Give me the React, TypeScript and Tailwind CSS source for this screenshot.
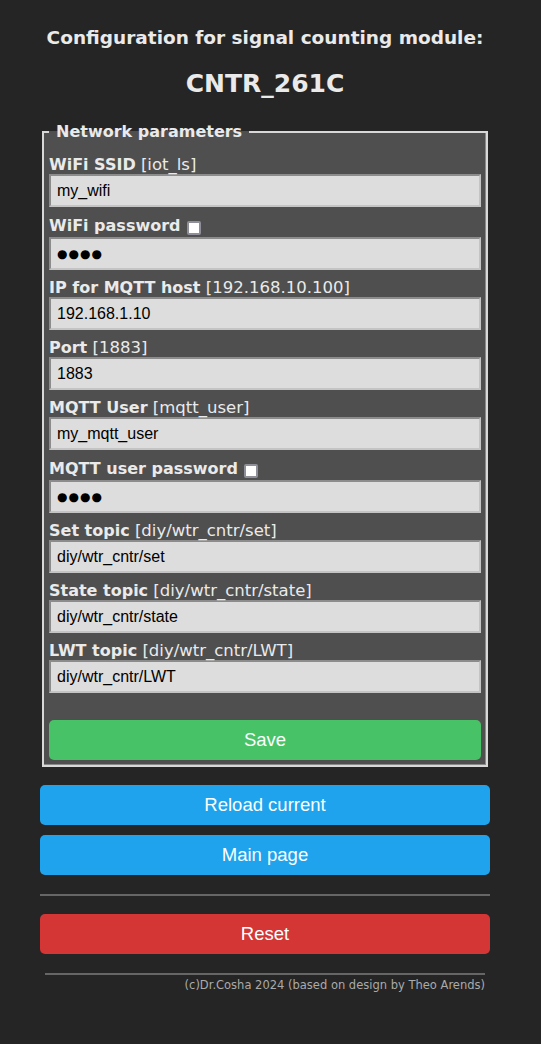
import React from 'react';

const fields = [
  { label: 'WiFi SSID', hint: '[iot_ls]', value: 'my_wifi' },
  { label: 'WiFi password', check: true, value: '●●●●', secret: true },
  { label: 'IP for MQTT host', hint: '[192.168.10.100]', value: '192.168.1.10' },
  { label: 'Port', hint: '[1883]', value: '1883' },
  { label: 'MQTT User', hint: '[mqtt_user]', value: 'my_mqtt_user' },
  { label: 'MQTT user password', check: true, value: '●●●●', secret: true },
  { label: 'Set topic', hint: '[diy/wtr_cntr/set]', value: 'diy/wtr_cntr/set' },
  { label: 'State topic', hint: '[diy/wtr_cntr/state]', value: 'diy/wtr_cntr/state' },
  { label: 'LWT topic', hint: '[diy/wtr_cntr/LWT]', value: 'diy/wtr_cntr/LWT' },
];

export default function App() {
  return (
    <div className="min-h-[1044px] bg-[#252525] font-['DejaVu_Sans',Verdana,sans-serif] text-[#eaeaea]">
      <div className="ml-[40px] w-[450px]">
        <h3 className="pt-[26px] text-center text-[18.5px] font-bold leading-[24px]">
          Configuration for signal counting module:
        </h3>
        <h2 className="mt-[22px] text-center text-[25px] font-bold leading-[24px]">CNTR_261C</h2>

        <fieldset className="mx-[2px] mt-[26px] border-2 border-[#d8d8d8] bg-[#4f4f4f] px-[5px] pb-[5px] shadow-[inset_-1px_-1px_0_#8a8a8a]">
          <legend className="px-[7px] text-[16px] font-bold leading-[19px]">Network parameters</legend>
          <div className="mt-[14px] flex flex-col gap-[8px]">
            {fields.map((f) => (
              <Field key={f.label} {...f} />
            ))}
          </div>
          <button className="mt-[27px] h-[40px] w-full rounded-[5px] bg-[#47c266] font-['Liberation_Sans',Arial,sans-serif] text-[18.5px] text-[#faffff]">
            Save
          </button>
        </fieldset>

        <div className="mt-[18px] flex flex-col gap-[10px]">
          <Btn color="bg-[#1fa3ec]">Reload current</Btn>
          <Btn color="bg-[#1fa3ec]">Main page</Btn>
        </div>
        <hr className="mt-[19px] border-t-2 border-[#666]" />
        <div className="mt-[18px]">
          <Btn color="bg-[#d43535]">Reset</Btn>
        </div>

        <div className="mx-[5px] mt-[19px] border-t-2 border-[#666] pt-[3px] text-right text-[11.5px] leading-[14px] text-[#aaaaaa]">
          (c)Dr.Cosha 2024 (based on design by Theo Arends)
        </div>
      </div>
    </div>
  );
}

function Field({ label, hint, value, check, secret }: { label: string; hint?: string; value: string; check?: boolean; secret?: boolean }) {
  return (
    <div>
      <div className={check ? 'flex h-[22px] items-center' : 'h-[19px] leading-[19px]'}>
        <span className="text-[16px] font-bold">{label}</span>
        {hint && <span className="text-[16.5px]"> {hint}</span>}
        {check && (
          <span className="ml-[6px] mt-[3px] inline-block h-[14px] w-[14px] rounded-[2px] border-2 border-[#8f8f99] bg-white" />
        )}
      </div>
      <input
        readOnly
        value={value}
        className={
          'block h-[33px] w-full border-2 border-t-[#8c8c8c] border-l-[#8c8c8c] border-r-[#c4c4c4] border-b-[#c4c4c4] bg-[#dddddd] px-[6px] text-black outline-none ' +
          (secret ? "font-['DejaVu_Sans',sans-serif] text-[12px] tracking-[1px]" : "font-['Liberation_Sans',Arial,sans-serif] text-[16px]")
        }
      />
    </div>
  );
}

function Btn({ color, children }: { color: string; children: React.ReactNode }) {
  return (
    <button className={'h-[40px] w-full rounded-[5px] font-[\'Liberation_Sans\',Arial,sans-serif] text-[18.5px] text-[#faffff] ' + color}>
      {children}
    </button>
  );
}
